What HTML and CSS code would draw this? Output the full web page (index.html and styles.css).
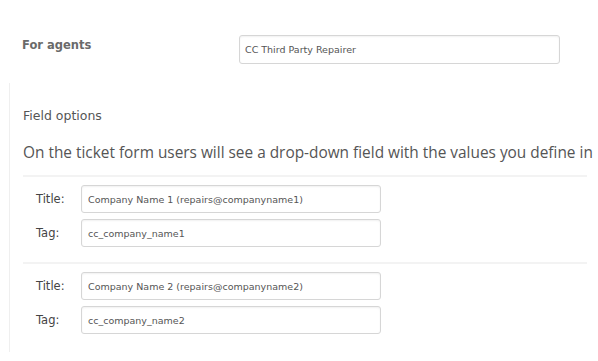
FILE: index.html
```html
<!DOCTYPE html>
<html lang="en">
<head>
    <meta charset="UTF-8">
    <meta name="viewport" content="width=device-width, initial-scale=1.0">
    <title>Field options</title>
    <link rel="stylesheet" href="styles.css">
</head>
<body>
    <div class="agents-row">
        <label class="agents-label">For agents</label>
        <input class="agents-input" type="text" value="CC Third Party Repairer">
    </div>

    <div class="panel">
        <h4 class="panel-title">Field options</h4>
        <p class="panel-desc">On the ticket form users will see a drop-down field with the values you define in</p>

        <div class="option">
            <div class="option-row">
                <label>Title:</label>
                <input type="text" value="Company Name 1 (repairs@companyname1)">
            </div>
            <div class="option-row">
                <label>Tag:</label>
                <input type="text" value="cc_company_name1">
            </div>
        </div>

        <div class="option">
            <div class="option-row">
                <label>Title:</label>
                <input type="text" value="Company Name 2 (repairs@companyname2)">
            </div>
            <div class="option-row">
                <label>Tag:</label>
                <input type="text" value="cc_company_name2">
            </div>
        </div>
    </div>
</body>
</html>
```

FILE: styles.css
```css
body {
    font-family: "DejaVu Sans", sans-serif;
    background-color: #fff;
    margin: 0;
    overflow: hidden;
}

.agents-row {
    display: flex;
    align-items: center;
    padding: 35px 0 0 22px;
}

.agents-label {
    width: 217px;
    font-size: 11.5px;
    font-weight: bold;
    color: #6a6a6a;
    margin-top: -10px;
}

input {
    font-family: "DejaVu Sans", sans-serif;
    color: #555;
    border: 1px solid #d6d6d6;
    border-radius: 3px;
    box-shadow: inset 0 1px 2px rgba(0, 0, 0, 0.06);
    box-sizing: border-box;
    outline: none;
}

.agents-input {
    width: 321px;
    height: 29px;
    padding: 0 5px;
    font-size: 9.5px;
}

.panel {
    margin: 19px 11px 0 9px;
    border-left: 1px solid #efefef;
    padding: 25px 0 18px 13px;
}

.panel-title {
    margin: 0;
    font-size: 12.5px;
    font-weight: normal;
    color: #555;
}

.panel-desc {
    margin: 19px 0 0 0;
    font-family: "Open Sans", sans-serif;
    font-size: 15.4px;
    color: #555;
    white-space: nowrap;
    padding-bottom: 12px;
    border-bottom: 2px solid #f3f3f3;
}

.option {
    display: flex;
    flex-direction: column;
    gap: 6px;
    padding: 8px 0 15px 13px;
    border-bottom: 2px solid #f3f3f3;
}

.option:last-child {
    border-bottom: none;
    padding-bottom: 0;
}

.option-row {
    display: flex;
    align-items: center;
}

.option-row label {
    width: 45px;
    font-size: 11.5px;
    color: #444;
}

.option-row input {
    width: 300px;
    height: 28px;
    padding: 0 6px;
    font-size: 9.5px;
}
```
